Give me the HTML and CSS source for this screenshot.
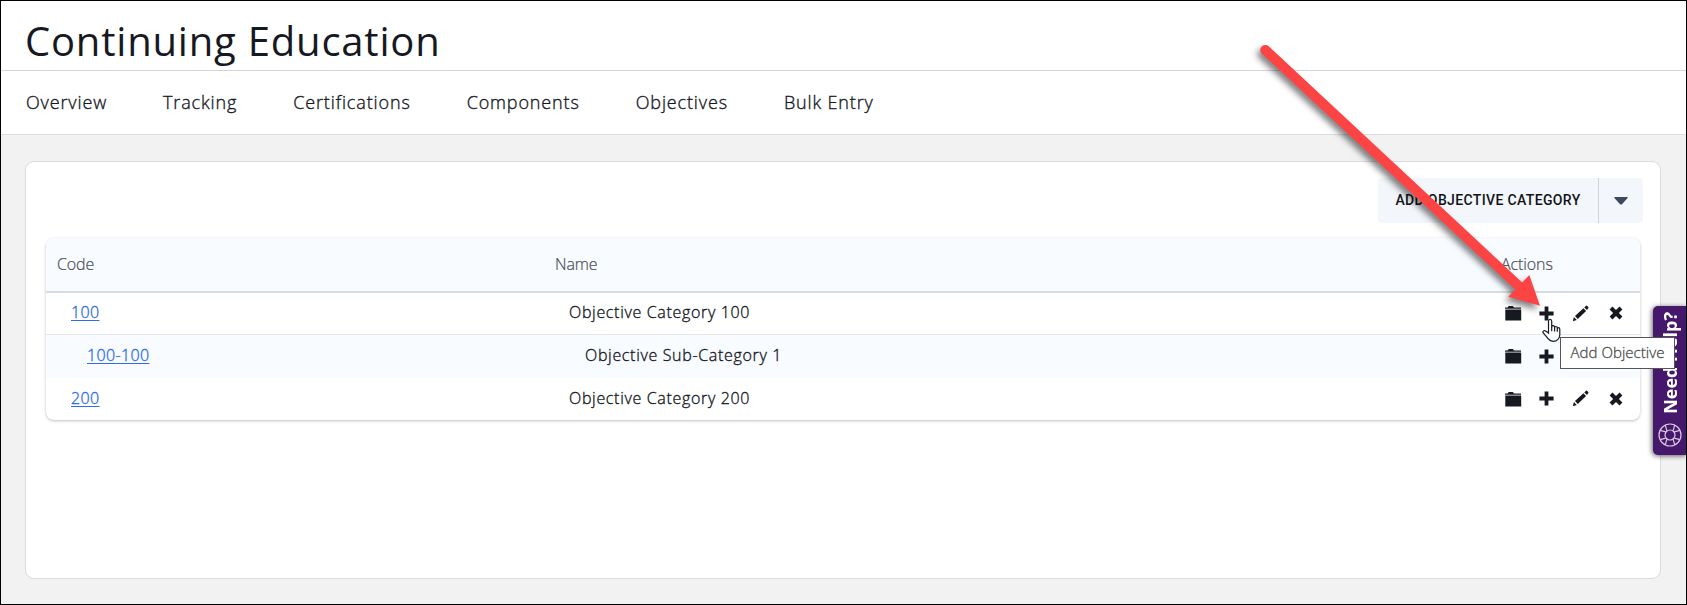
FILE: index.html
```html
<!DOCTYPE html>
<html lang="en">
<head>
<meta charset="utf-8">
<title>Continuing Education</title>
<link rel="stylesheet" href="styles.css">
</head>
<body>
<svg class="defs" width="0" height="0" aria-hidden="true">
  <symbol id="folder" viewBox="0 0 17 16"><path d="M0 2.6h2.6L3.8 1h4l1.2 1.6H16v1.2H0zM.3 4.6h15.9v10.9H.3z"/></symbol>
  <symbol id="plus" viewBox="0 0 15 15"><path d="M5.6.4h3.8v5.2h5.2v3.8H9.4v5.2H5.6V9.4H.4V5.6h5.2z"/></symbol>
  <symbol id="pencil" viewBox="0 0 17 17"><path d="M.8 16.2 1.9 12l2.9 3zM3 11 11.4 3.3l2.7 2.8L5.8 13.900zM12.300 2.400 14 .8q.7-.5 1.300.1l1 1.100q.5.700-.1 1.300L15 4.900z"/></symbol>
  <symbol id="cross" viewBox="0 0 14 14"><path d="M3.400.600 7 4.100 10.600.600l2.800 2.800L9.900 7l3.500 3.600-2.800 2.800L7 9.900l-3.600 3.500-2.800-2.800L4.100 7 .600 3.400z"/></symbol>
</svg>
<div class="page">
  <header class="page-header"><h1>Continuing Education</h1></header>
  <nav class="tabs">
    <a>Overview</a><a>Tracking</a><a>Certifications</a><a>Components</a><a>Objectives</a><a>Bulk Entry</a>
  </nav>
  <main class="content">
    <section class="card">
      <div class="toolbar">
        <button class="btn-main">ADD OBJECTIVE CATEGORY</button>
        <button class="btn-caret" aria-label="More"><svg width="14" height="8" viewBox="0 0 14 8"><path d="M.8 0h12.400q.8.600.2 1.200L8.200 7q-1.200 1.200-2.400 0L.6 1.200Q0 .600.8 0z"/></svg></button>
      </div>
      <div class="table">
        <div class="row head"><span>Code</span><span>Name</span><span>Actions</span></div>
        <div class="row">
          <div class="code"><a>100</a></div><div class="name">Objective Category 100</div>
          <div class="actions"><svg class="folder"><use href="#folder"/></svg><svg class="plus"><use href="#plus"/></svg><svg class="pencil"><use href="#pencil"/></svg><svg class="cross"><use href="#cross"/></svg></div>
        </div>
        <div class="row sub">
          <div class="code"><a>100-100</a></div><div class="name">Objective Sub-Category 1</div>
          <div class="actions"><svg class="folder"><use href="#folder"/></svg><svg class="plus"><use href="#plus"/></svg></div>
        </div>
        <div class="row">
          <div class="code"><a>200</a></div><div class="name">Objective Category 200</div>
          <div class="actions"><svg class="folder"><use href="#folder"/></svg><svg class="plus"><use href="#plus"/></svg><svg class="pencil"><use href="#pencil"/></svg><svg class="cross"><use href="#cross"/></svg></div>
        </div>
      </div>
    </section>
  </main>
  <aside class="help">
    <span>Need Help?</span>
    <svg width="24" height="24" viewBox="0 0 24 24"><circle cx="12" cy="12" r="11"/><circle cx="12" cy="12" r="5"/><path d="M7.300 2.100l1.600 5.700M2.100 7.300l5.700 1.600M16.700 2.100l-1.600 5.700M21.900 7.300l-5.700 1.600M7.300 21.900l1.600-5.700M2.100 16.700l5.700-1.600M16.700 21.900l-1.600-5.700M21.900 16.700l-5.700-1.600"/></svg>
  </aside>
  <svg class="arrow" width="310" height="290" viewBox="0 0 310 290"><path d="M22.700 16.300 276.200 252.400 283.300 245 294 275.700 262.300 266.700 269.300 259.600 15.900 23.700a5 5 0 0 1 6.800-7.400z"/></svg>
  <div class="tooltip">Add Objective</div>
  <svg class="cursor" width="19" height="25" viewBox="0 0 19 25"><path d="M6.500 15V3.200q0-1.900 1.600-1.900t1.600 1.900v6q0-1.500 1.400-1.500t1.500 1.500v.800q0-1.500 1.300-1.500t1.400 1.500v1q0-1.300 1.200-1.300t1.300 1.500v5.500q0 2.300-1.500 4.300-1.500 2.300-5 2.300-3.200 0-5-2.400L1.300 15q-.8-1.300.2-2.100 1.100-.8 2.200.1z"/><path d="M9.700 9v4.300M12.600 10v3.500M15.300 11v2.700"/></svg>
</div>
</body>
</html>
```
FILE: styles.css
```css
* { box-sizing: border-box; }
html { overflow: hidden; }
body { margin: 0; font-family: "Open Sans", sans-serif; font-weight: 300; color: #16191f; background: #f2f2f2; }
.defs { position: absolute; }
.page { position: relative; width: 1687px; height: 605px; border: 1px solid #000; overflow: hidden; background: #f2f2f2; display: flex; flex-direction: column; }
.page-header { height: 70px; padding: 13px 24px 0; background: #fff; border-bottom: 1px solid #d6d6d6; }
h1 { margin: 0; font-size: 40px; line-height: 54px; font-weight: 400; letter-spacing: .8px; white-space: nowrap; }
.tabs { height: 64px; padding: 0 25px 2px; display: flex; align-items: center; gap: 56px; background: #fff; border-bottom: 1px solid #dedede; font-size: 18px; letter-spacing: .86px; -webkit-text-stroke: .35px; white-space: nowrap; }
.content { flex: 1; padding: 26px 25px 25px 24px; display: flex; }
.card { flex: 1; background: #fff; border: 1px solid #dcdcdc; border-radius: 9px; padding: 16px 17px 0 20px; }
.toolbar { display: flex; justify-content: flex-end; height: 45px; }
.toolbar button { border: 0; padding: 0; background: #f3f6fa; color: #111519; }
.toolbar .btn-main { width: 220px; padding-bottom: 1px; border-radius: 4px 0 0 4px; font: 500 14px Roboto, sans-serif; letter-spacing: .36px; white-space: nowrap; }
.toolbar .btn-caret { width: 45px; border-left: 1px solid #d0d4d8; border-radius: 0 4px 4px 0; }
.btn-caret svg { display: block; margin: 0 auto; fill: #3c4a5f; }
.table { margin: 15px 3px 0 0; border-radius: 8px; box-shadow: 0 1px 3px rgba(0,0,0,.25); overflow: hidden; }
.row { display: grid; grid-template-columns: 498px 942px 1fr; align-items: center; height: 43px; font-size: 16px; letter-spacing: .67px; white-space: nowrap; -webkit-text-stroke: .35px; }
.head { height: 55px; padding: 0 0 2px 11px; background: #f8fbff; border-bottom: 2px solid #d9dcdf; color: #4b4e53; letter-spacing: -.1px; -webkit-text-stroke: .2px; }
.head span:last-child { margin-left: 4px; }
.row:not(.head) { padding-left: 25px; }
.row:nth-child(2) { height: 42px; border-bottom: 1px solid #e6e8eb; }
.row.sub { height: 43px; background: #f8fbff; }
.row:last-child { height: 42px; }
.code, .name { padding-bottom: 3px; }
.code { letter-spacing: .35px; }
.sub .code, .sub .name { padding-left: 16px; }
.code a { color: #2f6bf0; text-decoration: underline; text-underline-offset: 2px; }
.actions { display: flex; align-items: center; margin-left: -6px; padding-bottom: 1px; fill: #16191f; }
.actions svg { flex: none; }
.folder { width: 17px; height: 16px; margin-right: 17px; }
.plus { width: 15px; height: 15px; margin-right: 18px; }
.pencil { width: 17px; height: 17px; margin-right: 20px; }
.cross { width: 14px; height: 14px; }
.help { position: absolute; right: -1px; top: 305px; width: 34px; height: 149px; background: #45186b; border-radius: 5px 0 0 5px; box-shadow: -1px 1px 5px rgba(0,0,0,.6); display: flex; flex-direction: column; align-items: center; justify-content: space-between; padding: 6px 0 8px; }
.help span { writing-mode: vertical-rl; transform: rotate(180deg); color: #fff; font: 700 18px/24px "Open Sans", sans-serif; white-space: nowrap; }
.help svg { fill: none; stroke: #d7c9e3; stroke-width: 1.2; }
.arrow { position: absolute; left: 1245px; top: 29px; fill: #fd4444; filter: drop-shadow(-3px 4px 3px rgba(0,0,0,.5)); }
.tooltip { position: absolute; left: 1559px; top: 336px; width: 115px; height: 32px; border: 1px solid #555; background: #fff; color: #4c4c4c; font-size: 15px; line-height: 28px; letter-spacing: .05px; text-align: center; white-space: nowrap; -webkit-text-stroke: .3px; }
.cursor { position: absolute; left: 1541px; top: 317px; fill: #fff; stroke: #151922; stroke-width: 1.200; }
```
